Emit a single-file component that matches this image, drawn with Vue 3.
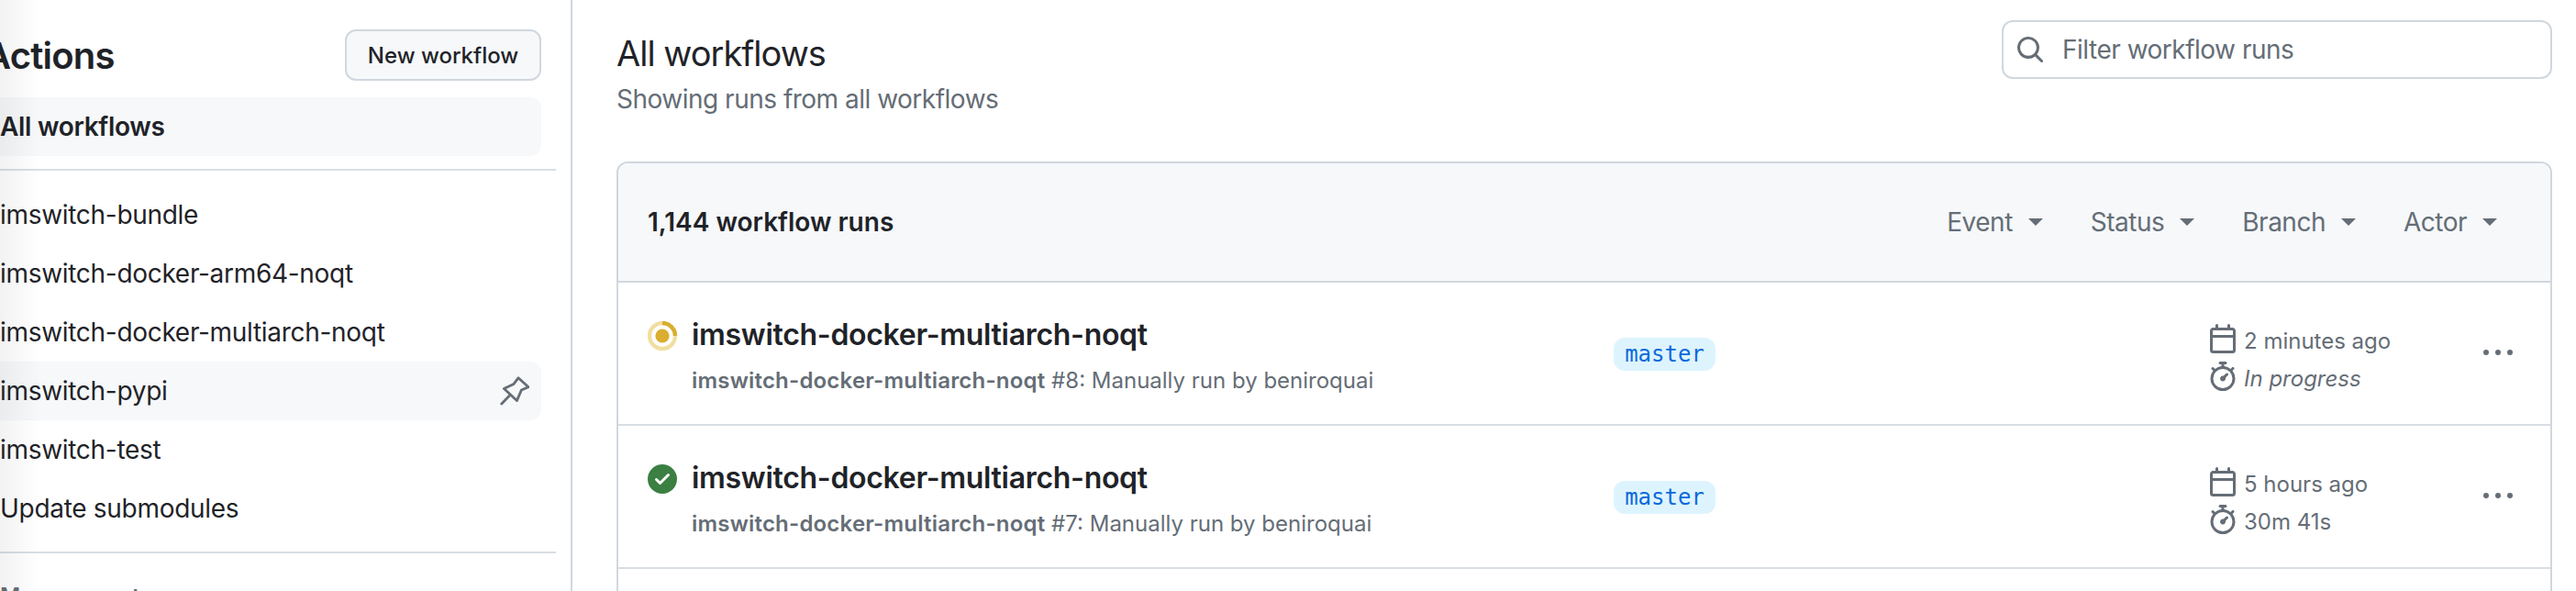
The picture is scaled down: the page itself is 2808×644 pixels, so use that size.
<script setup>
const workflows = [
  { name: 'imswitch-bundle' },
  { name: 'imswitch-docker-arm64-noqt' },
  { name: 'imswitch-docker-multiarch-noqt' },
  { name: 'imswitch-pypi', hover: true },
  { name: 'imswitch-test' },
  { name: 'Update submodules' }
]
const filters = ['Event', 'Status', 'Branch', 'Actor']
const runs = [
  { title: 'imswitch-docker-multiarch-noqt', num: '#8', when: '2 minutes ago', dur: 'In progress', active: true },
  { title: 'imswitch-docker-multiarch-noqt', num: '#7', when: '5 hours ago', dur: '30m 41s', active: false }
]
const calendar = 'M4.75 0a.75.75 0 0 1 .75.75V2h5V.75a.75.75 0 0 1 1.5 0V2h1.25c.966 0 1.75.784 1.75 1.75v10.5A1.75 1.75 0 0 1 13.25 16H2.75A1.75 1.75 0 0 1 1 14.25V3.75C1 2.784 1.784 2 2.75 2H4V.75A.75.75 0 0 1 4.75 0ZM2.5 7.5v6.75c0 .138.112.25.25.25h10.5a.25.25 0 0 0 .25-.25V7.5Zm10.75-4H2.75a.25.25 0 0 0-.25.25V6h11V3.75a.25.25 0 0 0-.25-.25Z'
const stopwatch = 'M5.75.75A.75.75 0 0 1 6.5 0h3a.75.75 0 0 1 0 1.5h-.75v1l-.001.041a6.724 6.724 0 0 1 3.464 1.435l.007-.006.75-.75a.75.75 0 1 1 1.06 1.06l-.75.75-.006.007a6.75 6.75 0 1 1-10.548 0L2.72 5.03l-.75-.75a.751.751 0 0 1 .018-1.042.751.751 0 0 1 1.042-.018l.75.75.007.006A6.72 6.72 0 0 1 7.25 2.541V1.5H6.5a.75.75 0 0 1-.75-.75ZM8 14.5a5.25 5.25 0 1 0-.001-10.501A5.25 5.25 0 0 0 8 14.5Zm.389-6.7 1.33-1.33a.75.75 0 1 1 1.061 1.06L9.45 8.861A1.503 1.503 0 0 1 8 10.75a1.499 1.499 0 1 1 .389-2.95Z'
const kebab = 'M8 9a1.5 1.5 0 1 0 0-3 1.5 1.5 0 0 0 0 3ZM1.5 9a1.5 1.5 0 1 0 0-3 1.5 1.5 0 0 0 0 3Zm13 0a1.5 1.5 0 1 0 0-3 1.5 1.5 0 0 0 0 3Z'
const search = 'M10.68 11.74a6 6 0 0 1-7.922-8.982 6 6 0 0 1 8.982 7.922l3.04 3.04a.749.749 0 0 1-.326 1.275.749.749 0 0 1-.734-.215ZM11.5 7a4.499 4.499 0 1 0-8.997 0A4.499 4.499 0 0 0 11.5 7Z'
const check = 'M8 16A8 8 0 1 1 8 0a8 8 0 0 1 0 16Zm3.78-9.72a.751.751 0 0 0-.018-1.042.751.751 0 0 0-1.042-.018L6.75 9.19 5.28 7.72a.751.751 0 0 0-1.042.018.751.751 0 0 0-.018 1.042l2 2a.75.75 0 0 0 1.06 0Z'
</script>

<template>
  <div class="page">
    <aside class="sidebar">
      <div class="side-head">
        <h2 class="side-title">Actions</h2>
        <button class="new-btn">New workflow</button>
      </div>
      <div class="item current">All workflows</div>
      <div class="rule"></div>
      <div v-for="w in workflows" :key="w.name" class="item" :class="{ hover: w.hover }">
        <span>{{ w.name }}</span>
        <svg v-if="w.hover" class="pin" viewBox="0 0 16 16" width="32" height="32">
          <path d="M10 .9 15.5 5.9 11.7 7.5 9.2 13.3 2.2 6.7 7.5 4.2Z" fill="none" stroke="#656d76" stroke-width="1.4" stroke-linejoin="round" />
          <path d="M5 10.8.9 15" fill="none" stroke="#656d76" stroke-width="1.4" stroke-linecap="round" />
        </svg>
      </div>
      <div class="rule second"></div>
      <div class="side-label">Management</div>
    </aside>

    <main class="main">
      <div class="top">
        <div>
          <h1 class="title">All workflows</h1>
          <p class="subtitle">Showing runs from all workflows</p>
        </div>
        <div class="filter">
          <svg viewBox="0 0 16 16" width="32" height="32"><path :d="search" fill="#656d76" /></svg>
          <span>Filter workflow runs</span>
        </div>
      </div>

      <section class="box">
        <header class="box-head">
          <strong class="count">1,144 workflow runs</strong>
          <div class="filters">
            <span v-for="f in filters" :key="f" class="drop">{{ f }}<i class="caret"></i></span>
          </div>
        </header>

        <article v-for="r in runs" :key="r.num" class="run">
          <div class="run-icon">
            <svg v-if="r.active" viewBox="0 0 16 16" width="32" height="32">
              <circle cx="8" cy="8" r="7" fill="none" stroke="#dbab09" stroke-width="2.2" opacity=".38" />
              <path d="M8 1a7 7 0 0 1 7 7" fill="none" stroke="#d8ae2e" stroke-width="2.2" />
              <circle cx="8" cy="8" r="3.8" fill="#dbae30" />
            </svg>
            <svg v-else viewBox="0 0 16 16" width="32" height="32"><path :d="check" fill="#3b7f42" /></svg>
          </div>
          <div class="run-main">
            <div class="run-title">{{ r.title }}</div>
            <div class="run-sub"><b>{{ r.title }}</b> {{ r.num }}: Manually run by beniroquai</div>
          </div>
          <div class="run-branch"><span class="badge">master</span></div>
          <div class="run-meta">
            <div class="meta-line">
              <svg viewBox="0 0 16 16" width="32" height="32"><path :d="calendar" fill="#656d76" /></svg>
              <span>{{ r.when }}</span>
            </div>
            <div class="meta-line">
              <svg viewBox="0 0 16 16" width="32" height="32"><path :d="stopwatch" fill="#656d76" /></svg>
              <span :class="{ em: r.active }">{{ r.dur }}</span>
            </div>
          </div>
          <svg class="kebab" viewBox="0 0 16 16" width="32" height="32"><path :d="kebab" fill="#656d76" /></svg>
        </article>
      </section>
    </main>
    <div class="edge-shade"></div>
  </div>
</template>

<style>
html, body { margin: 0; background: #fff; }
</style>

<style scoped>
.page {
  position: relative;
  display: flex;
  width: 2808px;
  height: 644px;
  overflow: hidden;
  background: #fff;
  color: #1f2328;
  font-family: Inter, "Liberation Sans", sans-serif;
}
.sidebar {
  flex: none;
  box-sizing: border-box;
  width: 624px;
  border-right: 2px solid #d0d7de;
  padding-right: 16px;
}
.side-head {
  display: flex;
  align-items: center;
  justify-content: space-between;
  height: 56px;
  margin: 32px 16px 18px 0;
}
.side-title {
  margin: 0 0 0 -17px;
  font-size: 40px;
  font-weight: 600;
  letter-spacing: -0.8px;
}
.new-btn {
  box-sizing: border-box;
  width: 214px;
  height: 56px;
  padding: 0;
  border: 2px solid #d0d7de;
  border-radius: 12px;
  background: #f6f8fa;
  color: #1f2328;
  font: 500 24px Inter, "Liberation Sans", sans-serif;
}
.item {
  display: flex;
  align-items: center;
  justify-content: space-between;
  box-sizing: border-box;
  height: 64px;
  margin: 0 16px 0 -16px;
  padding: 0 13px 0 16px;
  border-radius: 12px;
  font-size: 28px;
  letter-spacing: -0.3px;
}
.item.current { background: #f6f8fa; font-weight: 600; }
.item.hover { background: #f6f8fa; }
.rule {
  height: 2px;
  margin: 14px 0 16px;
  background: #d8dee4;
}
.rule.second { margin: 15px 0 0; }
.side-label {
  margin-top: 32px;
  color: #656d76;
  font-size: 24px;
  font-weight: 600;
}
.main {
  flex: 1;
  min-width: 0;
  padding: 0 26px 0 48px;
}
.top {
  display: flex;
  align-items: flex-start;
  justify-content: space-between;
  height: 176px;
}
.title {
  margin: 32px 0 0;
  font-size: 38px;
  line-height: 52px;
  font-weight: 400;
  letter-spacing: -1px;
}
.subtitle {
  margin: 4px 0 0;
  color: #656d76;
  font-size: 28px;
  line-height: 40px;
  letter-spacing: -0.5px;
}
.filter {
  display: flex;
  align-items: center;
  gap: 19px;
  box-sizing: border-box;
  width: 600px;
  height: 64px;
  margin-top: 22px;
  padding-left: 13px;
  border: 2px solid #d0d7de;
  border-radius: 12px;
  color: #656d76;
  font-size: 28px;
  letter-spacing: -0.5px;
}
.box {
  box-sizing: border-box;
  min-height: 600px;
  border: 2px solid #d0d7de;
  border-radius: 12px;
}
.box-head {
  display: flex;
  align-items: center;
  justify-content: space-between;
  box-sizing: border-box;
  height: 130px;
  padding: 0 58px 0 32px;
  border-bottom: 2px solid #d0d7de;
  border-radius: 10px 10px 0 0;
  background: #f6f8fa;
}
.count { font-size: 28px; font-weight: 600; }
.filters { display: flex; gap: 52px; }
.drop {
  display: flex;
  align-items: center;
  gap: 17px;
  color: #656d76;
  font-size: 28px;
  letter-spacing: -0.5px;
}
.caret {
  border-top: 8px solid #656d76;
  border-left: 8px solid transparent;
  border-right: 8px solid transparent;
}
.run {
  display: flex;
  align-items: center;
  box-sizing: border-box;
  height: 156px;
  padding: 0 38px 0 32px;
  border-bottom: 2px solid #d8dee4;
}
.run-icon {
  align-self: flex-start;
  height: 32px;
  margin: 42px 16px 0 0;
}
.run-icon svg { display: block; }
.run-main { align-self: flex-start; width: 1005px; margin-top: 35px; }
.run-title { font-size: 32px; line-height: 44px; font-weight: 600; letter-spacing: -0.3px; }
.run-sub { margin-top: 10px; color: #656d76; font-size: 24px; line-height: 36px; }
.run-sub b { font-weight: 600; letter-spacing: 0.2px; }
.run-branch { width: 650px; padding-top: 2px; }
.badge {
  display: inline-block;
  box-sizing: border-box;
  width: 111px;
  height: 36px;
  border-radius: 12px;
  background: #ddf4ff;
  color: #0969da;
  font: 24px/36px "DejaVu Sans Mono", "Liberation Mono", monospace;
  text-align: center;
}
.run-meta {
  display: flex;
  flex-direction: column;
  gap: 9px;
  align-self: flex-start;
  width: 298px;
  margin-top: 45px;
  color: #656d76;
  font-size: 24px;
}
.meta-line { display: flex; align-items: center; gap: 7px; height: 32px; margin-left: -2px; }
.meta-line span { margin-top: 4px; }
.em { font-style: italic; }
.kebab { flex: none; }
.edge-shade {
  position: absolute;
  left: 0;
  top: 0;
  bottom: 0;
  width: 44px;
  background: linear-gradient(90deg, rgba(0, 0, 0, .05), rgba(0, 0, 0, 0));
  pointer-events: none;
}
</style>
